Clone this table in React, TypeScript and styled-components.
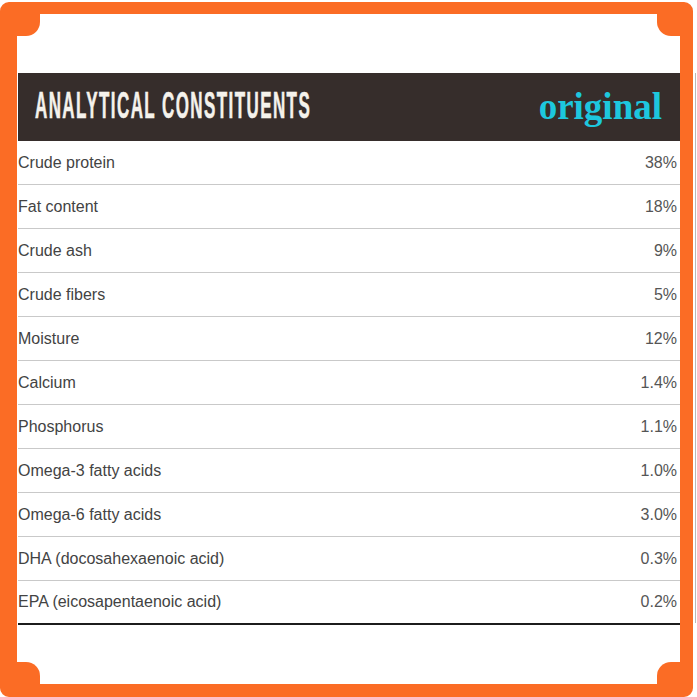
import React from 'react';
import styled, { createGlobalStyle } from 'styled-components';

const GlobalStyle = createGlobalStyle`
    html, body {
        margin: 0;
        padding: 0;
        background: #ffffff;
    }
`;

const Page = styled.div`
    position: relative;
    width: 697px;
    height: 697px;
    overflow: hidden;
    box-sizing: border-box;
    padding: 73px 0 0 18px;
    display: flex;
    align-items: flex-start;
    gap: 15px;
    font-family: 'Liberation Sans', Arial, sans-serif;
`;

const Table = styled.div`
    width: 662px;
    display: flex;
    flex-direction: column;
    border-bottom: 2px solid #1c1c1c;
`;

const EdgeLine = styled.div`
    width: 1px;
    height: 550px;
    background: #b9b9b9;
`;

const Header = styled.div`
    height: 68px;
    background: #362d2b;
    display: flex;
    align-items: center;
    justify-content: space-between;
    padding: 0 18px 0 17px;
`;

const Title = styled.span`
    display: inline-block;
    color: #f5f2ec;
    font-weight: 700;
    font-size: 36px;
    letter-spacing: 3px;
    -webkit-text-stroke: 0.6px #f5f2ec;
    transform: scaleX(0.472);
    transform-origin: left center;
    white-space: nowrap;
    width: 278px;
    margin-top: -2px;
`;

const Badge = styled.span`
    color: #1dc7de;
    font-family: 'Liberation Serif', 'Times New Roman', serif;
    font-weight: 700;
    font-size: 37px;
    margin-top: -2px;
`;

const Row = styled.div<{ $last?: boolean }>`
    height: ${(p) => (p.$last ? '42px' : '43px')};
    display: flex;
    align-items: center;
    justify-content: space-between;
    padding-right: 3px;
    border-bottom: ${(p) => (p.$last ? 'none' : '1px solid #c9c9c9')};
    font-size: 16px;
`;

const Label = styled.span`
    color: #434343;
`;

const Value = styled.span`
    color: #555555;
`;

const Frame = styled.div`
    position: absolute;
    left: 0;
    top: 2px;
    right: 4px;
    bottom: 0;
    border-style: solid;
    border-color: #fb6c25;
    border-width: 12px 13px 13px 17px;
    border-radius: 9px;
    pointer-events: none;
`;

const Blob = styled.div<{ $v: 'top' | 'bottom'; $h: 'left' | 'right' }>`
    position: absolute;
    width: 23px;
    height: 22px;
    background: #fb6c25;
    ${(p) => p.$v}: 0;
    ${(p) => p.$h}: 0;
    border-${(p) => (p.$v === 'top' ? 'bottom' : 'top')}-${(p) => (p.$h === 'left' ? 'right' : 'left')}-radius: 14px;
`;

const rows: [string, string][] = [
    ['Crude protein', '38%'],
    ['Fat content', '18%'],
    ['Crude ash', '9%'],
    ['Crude fibers', '5%'],
    ['Moisture', '12%'],
    ['Calcium', '1.4%'],
    ['Phosphorus', '1.1%'],
    ['Omega-3 fatty acids', '1.0%'],
    ['Omega-6 fatty acids', '3.0%'],
    ['DHA (docosahexaenoic acid)', '0.3%'],
    ['EPA (eicosapentaenoic acid)', '0.2%'],
];

const App = () => (
    <>
        <GlobalStyle />
        <Page>
            <Table>
                <Header>
                    <Title>ANALYTICAL CONSTITUENTS</Title>
                    <Badge>original</Badge>
                </Header>
                {rows.map(([label, value], i) => (
                    <Row key={label} $last={i === rows.length - 1}>
                        <Label>{label}</Label>
                        <Value>{value}</Value>
                    </Row>
                ))}
            </Table>
            <EdgeLine />
            <Frame>
                <Blob $v="top" $h="left" />
                <Blob $v="top" $h="right" />
                <Blob $v="bottom" $h="left" />
                <Blob $v="bottom" $h="right" />
            </Frame>
        </Page>
    </>
);

export default App;
